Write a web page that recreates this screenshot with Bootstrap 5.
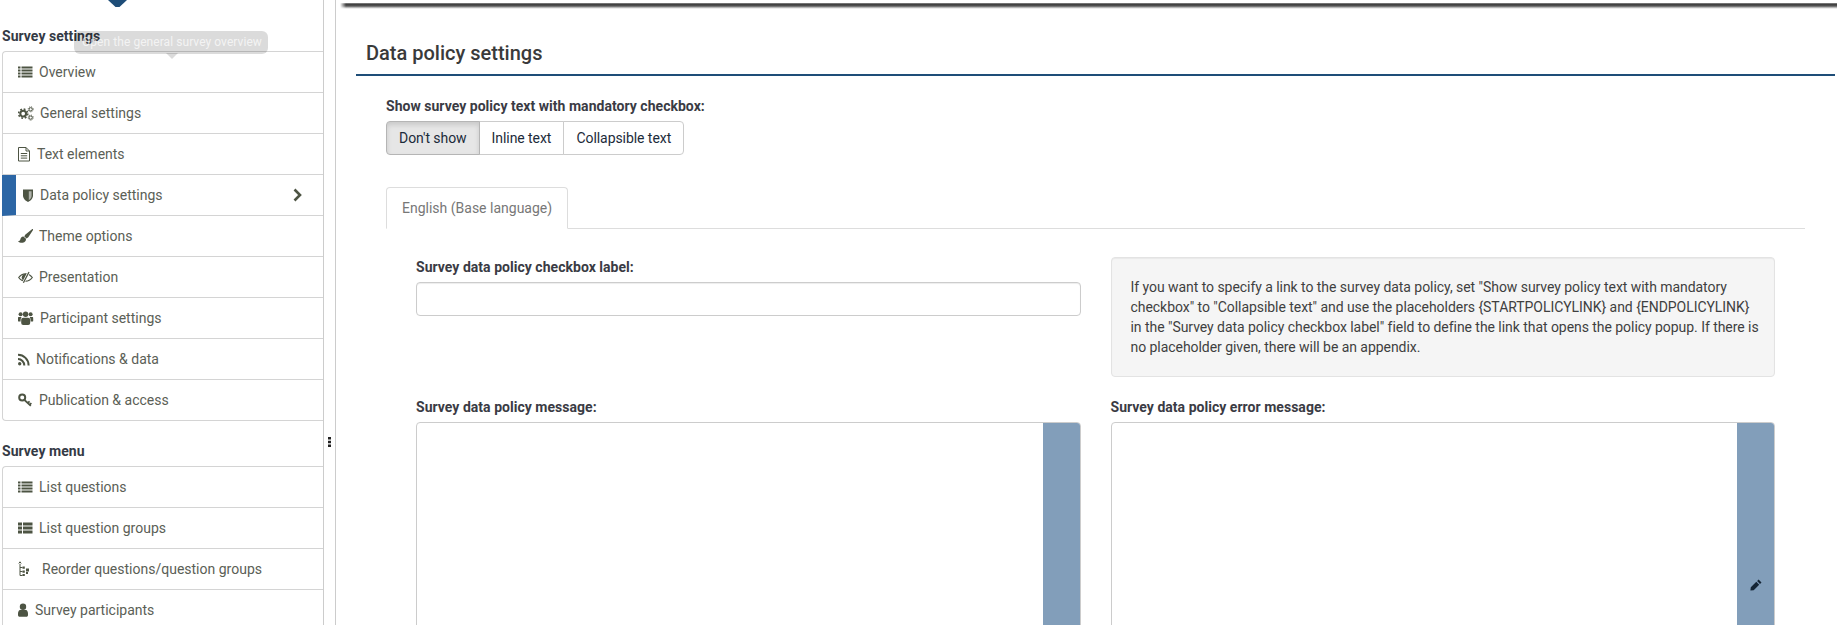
<!DOCTYPE html>
<html lang="en">
<head>
<meta charset="utf-8">
<title>Data policy settings</title>
<link rel="stylesheet" href="https://cdn.jsdelivr.net/npm/bootstrap@5.3.0/dist/css/bootstrap.min.css">
<style>
html,body{height:625px;overflow:hidden;}
body{font-family:Roboto,"Liberation Sans",sans-serif;font-size:14px;line-height:20px;color:#333;background:#fff;}
.sm-shell{height:625px;position:relative;}
.sm-side{width:336px;flex:none;border-right:1px solid #ccc;height:625px;overflow:hidden;}
.sm-side-in{width:324px;height:625px;padding-left:2px;border-right:1px solid #ccc;}
.sm-tri{display:block;margin-left:106px;margin-bottom:19px;}
.sm-head{font-size:14px;font-weight:700;line-height:20px;color:#343a45;margin:0 0 5px -2px;padding-left:2px;letter-spacing:.04px;}
.sm-head-2{margin-top:20px;}
.sm-list{--bs-list-group-border-color:#ccc;--bs-list-group-border-radius:4px;--bs-list-group-color:#5b6056;border-top-right-radius:0;border-bottom-right-radius:0;}
.sm-list .list-group-item{padding:10px 0 10px 15px;border-right:0;border-color:#d4d4d4;font-size:14px;line-height:20px;display:flex;align-items:center;color:#5b6056;border-top-right-radius:0;border-bottom-right-radius:0;}
.sm-list .list-group-item.sm-on{border-left:14px solid #2c66a5;padding-left:6px;}
.sm-list svg{flex:none;display:block;fill:#4d5443;}
.sm-chev{margin-left:auto;margin-right:20px;}
.sm-tip{position:absolute;left:74px;top:31px;padding:0;--bs-tooltip-bg:rgba(0,0,0,.14);--bs-tooltip-opacity:1;margin:0;}
.sm-tip .tooltip-inner{max-width:none;width:194px;height:23px;padding:3px 8px;font-family:Roboto,sans-serif;font-size:12px;line-height:17px;color:rgba(255,255,255,.7);text-align:left;white-space:nowrap;letter-spacing:.06px;}
.sm-tip .tooltip-arrow{position:absolute;left:92px;bottom:-6px;}
.sm-grip{position:absolute;left:328px;top:437px;display:block;}
.sm-main{flex:1;min-width:0;padding:0 2px 0 20px;overflow:hidden;}
.sm-topbar{height:6px;margin:3px -2px 0 -16px;background:linear-gradient(180deg,#aaa 0,#3c3c3c 17%,#555 50%,#999 67%,#ddd 85%,#fff 100%);-webkit-mask-image:linear-gradient(90deg,transparent 0,#000 6px);mask-image:linear-gradient(90deg,transparent 0,#000 6px);}
.sm-title{font-size:20px;font-weight:500;line-height:28px;color:#3a3a3a;margin:30px 0 0;padding:0 0 7px 10px;border-bottom:2px solid #1e4d78;}
.sm-body{padding:20px 30px 0;}
.sm-label{display:block;font-size:14px;font-weight:700;line-height:20px;color:#3a3b44;margin:0 0 5px;letter-spacing:.03px;}
.sm-btns .btn{--bs-btn-font-size:14px;--bs-btn-line-height:20px;--bs-btn-padding-x:12px;--bs-btn-padding-y:6px;--bs-btn-border-radius:4px;--bs-btn-border-color:#ccc;--bs-btn-color:#1c2b3a;--bs-btn-bg:#fff;letter-spacing:-.06px;}
.sm-btns .btn.active{background:#e6e6e6;border-color:#b5b5b5;color:#1c2b3a;box-shadow:inset 0 3px 5px rgba(0,0,0,.125);}
.sm-tabs{--bs-nav-tabs-border-color:#ddd;--bs-nav-tabs-border-radius:4px;--bs-nav-tabs-link-active-color:#777;--bs-nav-tabs-link-active-border-color:#ddd #ddd #fff;margin-top:32px;}
.sm-tabs .nav-link{padding:10px 15px;font-size:14px;line-height:20px;}
.sm-pane{padding:28px 30px 0;}
.sm-pane .row{--bs-gutter-x:30px;}
.sm-input{height:34px;padding:6px 12px;font-size:14px;border-radius:4px;border-color:#ccc;box-shadow:inset 0 1px 1px rgba(0,0,0,.075);}
.sm-well{background:#f5f5f5;border:1px solid #e3e3e3;border-radius:4px;padding:19px 11px 19px 19px;font-size:14px;line-height:20px;color:#3f3f3f;letter-spacing:-.05px;box-shadow:inset 0 1px 1px rgba(0,0,0,.05);}
.sm-row2{margin-top:20px;}
.sm-editor{height:300px;border:1px solid #ccc;border-radius:4px;background:#fff;overflow:hidden;}
.sm-panel{width:37px;margin-left:auto;background:#829eba;padding-top:156px;display:flex;justify-content:center;}
.sm-panel svg{display:block;fill:#152535;}
</style>
</head>
<body>
<div class="sm-shell d-flex">
  <aside class="sm-side">
    <div class="sm-side-in">
      <svg class="sm-tri" width="19" height="7" viewBox="0 0 19 7"><path d="M0 0H19L11.5 7H7.5Z" fill="#1e4d78"/></svg>
      <div class="sm-head">Survey settings</div>
      <div class="list-group sm-list">
        <a class="list-group-item list-group-item-action" href="#"><svg width="21" height="16" viewBox="0 0 21 16"><path d="M0 2.500h2.500v2H0zM3.500 2.500H14.500v2H3.500zM0 5.500h2.500v2H0zM3.500 5.500H14.500v2H3.500zM0 8.500h2.500v2H0zM3.500 8.500H14.500v2H3.500zM0 11.500h2.500v2H0zM3.500 11.500H14.500v2H3.500z"/></svg>Overview</a>
        <a class="list-group-item list-group-item-action" href="#"><svg width="22" height="16" viewBox="0 0 22 16"><g fill="none" stroke="#4d5443"><circle cx="5.200" cy="8.600" r="2.900" stroke-width="2.100"/><circle cx="5.200" cy="8.600" r="4.600" stroke-width="1.600" stroke-dasharray="1.800 1.810"/><circle cx="12.700" cy="4.300" r="1.600" stroke-width="1"/><circle cx="12.700" cy="4.300" r="2.500" stroke-width="1" stroke-dasharray="1 .96"/><circle cx="12.700" cy="12.600" r="1.600" stroke-width="1"/><circle cx="12.700" cy="12.600" r="2.500" stroke-width="1" stroke-dasharray="1 .96"/></g></svg>General settings</a>
        <a class="list-group-item list-group-item-action" href="#"><svg width="19" height="16" viewBox="0 0 19 16"><path d="M.5 1.500h7.500l3.500 3.500v10H.5zM8 1.500V5h3.500M2.800 7.500h6.400M2.800 9.800h6.400M2.800 12.100h6.400" fill="none" stroke="#4d5443" stroke-width="1"/></svg>Text elements</a>
        <a class="list-group-item list-group-item-action sm-on" href="#"><svg width="18" height="16" viewBox="0 0 18 16"><path d="M1 2.500h10v6c0 3.500-3 5.500-5 6.500-2-1-5-3-5-6.500z"/><path d="M6.800 4.200v9c1.800-1.100 2.800-2.700 2.800-4.700V4.200z" fill="#fff" fill-opacity=".55"/></svg>Data policy settings<svg class="sm-chev" width="11" height="14" viewBox="0 0 11 14"><path d="M2.500 1.500 8 7l-5.500 5.500" fill="none" stroke="#4d5443" stroke-width="2.600"/></svg></a>
        <a class="list-group-item list-group-item-action" href="#"><svg width="21" height="16" viewBox="0 0 21 16"><path d="M14 1.200 7.200 6.800l-.9 1.700 2.300 2 1.700-1.200L14.900 2.200c.4-.8-.2-1.500-.9-1zM5.400 8.600C3.400 8.800 2.600 10.200 2.300 11.500 2 12.700 1.400 13.100 0 13.200c1.300 1.300 3 1.800 4.700 1.500 2.400-.4 3.500-2 3.300-4z"/></svg>Theme options</a>
        <a class="list-group-item list-group-item-action" href="#"><svg width="21" height="16" viewBox="0 0 21 16"><path d="M.7 8.500C2.500 6 4.800 4.800 7.500 4.800S12.500 6 14.300 8.500C12.500 11 10.200 12.200 7.500 12.200S2.500 11 .7 8.500z" fill="none" stroke="#4d5443" stroke-width="1.200"/><path d="M8.800 4.800A4 4 0 0 0 3.700 8.500c0 1.500.9 2.800 2.100 3.400z"/><path d="M11 2.800 5.200 14" stroke="#fff" stroke-width="2.600" fill="none"/><path d="M11 3 5.400 13.800" stroke="#4d5443" stroke-width="1.300" fill="none"/></svg>Presentation</a>
        <a class="list-group-item list-group-item-action" href="#"><svg width="22" height="16" viewBox="0 0 22 16"><circle cx="2.600" cy="4.300" r="2"/><circle cx="12.600" cy="4.300" r="2"/><circle cx="7.600" cy="4.300" r="2.700"/><path d="M.4 7h3.200c-.6.800-1 1.800-1 3v1.500H.4C.1 11.500 0 11.200 0 11V8.500C0 7.600.1 7.300.4 7zM14.800 7h-3.200c.6.800 1 1.800 1 3v1.500h2.200c.3 0 .4-.3.4-.5V8.500c0-.9-.1-1.200-.4-1.500z"/><rect x="3.200" y="7.700" width="9" height="7.300" rx="2"/></svg>Participant settings</a>
        <a class="list-group-item list-group-item-action" href="#"><svg width="18" height="16" viewBox="0 0 18 16"><circle cx="1.700" cy="12.700" r="1.700"/><path d="M0 8.100a6.300 6.300 0 0 1 6.300 6.300M0 3.800a10.600 10.600 0 0 1 10.600 10.600" fill="none" stroke="#4d5443" stroke-width="2"/></svg>Notifications &amp; data</a>
        <a class="list-group-item list-group-item-action" href="#"><svg width="21" height="16" viewBox="0 0 21 16"><circle cx="4.200" cy="5.600" r="3" fill="none" stroke="#4d5443" stroke-width="2"/><path d="m6.500 8 6.300 5.800M9.700 11l1.900-1.700M11.600 12.700l1.800-1.600" fill="none" stroke="#4d5443" stroke-width="1.700"/></svg>Publication &amp; access</a>
      </div>
      <div class="sm-head sm-head-2">Survey menu</div>
      <div class="list-group sm-list">
        <a class="list-group-item list-group-item-action" href="#"><svg width="21" height="16" viewBox="0 0 21 16"><path d="M0 2.500h2.500v2H0zM3.500 2.500H14.500v2H3.500zM0 5.500h2.500v2H0zM3.500 5.500H14.500v2H3.500zM0 8.500h2.500v2H0zM3.500 8.500H14.500v2H3.500zM0 11.500h2.500v2H0zM3.500 11.500H14.500v2H3.500z"/></svg>List questions</a>
        <a class="list-group-item list-group-item-action" href="#"><svg width="21" height="16" viewBox="0 0 21 16"><path d="M0 2.500h4v3H0zM5 2.500h9.500v3H5zM0 6.500h4v3H0zM5 6.500h9.500v3H5zM0 10.500h4v3H0zM5 10.500h9.500v3H5z"/></svg>List question groups</a>
        <a class="list-group-item list-group-item-action" href="#"><svg width="24" height="16" viewBox="0 0 24 16"><path d="M2 3v11.500h2.500M2 6.500h2.500M2 10.500h2.500M.8 2.500 2 .8l1.200 1.700" fill="none" stroke="#4d5443" stroke-width="1"/><path d="M4.500 5.500h2.300v2.300H4.500zM4.500 9.500h2.300v2.300H4.500zM4.500 13h2.300v2H4.500zM8 7.500h3v3H8zM8 11h2v2H8z"/></svg>Reorder questions/question groups</a>
        <a class="list-group-item list-group-item-action" href="#"><svg width="17" height="16" viewBox="0 0 17 16"><circle cx="5" cy="4.800" r="3.200"/><path d="M1.800 8h6.400c1.200.5 1.800 2 1.800 4v1c0 1-.7 1.800-1.700 1.800H1.700C.7 14.800 0 14 0 13v-1c0-2 .6-3.500 1.800-4z"/></svg>Survey participants</a>
      </div>
    </div>
  </aside>
  <div class="tooltip bs-tooltip-top show sm-tip" role="tooltip"><div class="tooltip-arrow"></div><div class="tooltip-inner">Open the general survey overview</div></div>
  <svg class="sm-grip" width="3" height="10" viewBox="0 0 3 10"><path d="M0 0h3v2.500H0zM0 3.700h3v2.500H0zM0 7.400h3v2.500H0z" fill="#222"/></svg>
  <main class="sm-main">
    <div class="sm-topbar"></div>
    <h1 class="sm-title">Data policy settings</h1>
    <div class="sm-body">
      <span class="sm-label">Show survey policy text with mandatory checkbox:</span>
      <div class="btn-group sm-btns" role="group">
        <button type="button" class="btn active">Don't show</button>
        <button type="button" class="btn">Inline text</button>
        <button type="button" class="btn">Collapsible text</button>
      </div>
      <ul class="nav nav-tabs sm-tabs">
        <li class="nav-item"><a class="nav-link active" href="#">English (Base language)</a></li>
      </ul>
      <div class="sm-pane">
        <div class="row">
          <div class="col-6">
            <label class="sm-label" for="sm-cb">Survey data policy checkbox label:</label>
            <input id="sm-cb" class="form-control sm-input" type="text">
          </div>
          <div class="col-6">
            <div class="sm-well">If you want to specify a link to the survey data policy, set "Show survey policy text with mandatory checkbox" to "Collapsible text" and use the placeholders {STARTPOLICYLINK} and {ENDPOLICYLINK} in the "Survey data policy checkbox label" field to define the link that opens the policy popup. If there is no placeholder given, there will be an appendix.</div>
          </div>
        </div>
        <div class="row sm-row2">
          <div class="col-6">
            <span class="sm-label">Survey data policy message:</span>
            <div class="sm-editor d-flex"><div class="sm-panel"></div></div>
          </div>
          <div class="col-6">
            <span class="sm-label">Survey data policy error message:</span>
            <div class="sm-editor d-flex"><div class="sm-panel"><svg width="12" height="12" viewBox="0 0 12 12"><path d="M8.600.5 11.500 3.400 10 4.900 7.100 2zM6.300 2.800 9.200 5.700 3.700 11.200.4 11.600.8 8.300z"/></svg></div></div>
          </div>
        </div>
      </div>
    </div>
  </main>
</div>
<script src="https://cdn.jsdelivr.net/npm/bootstrap@5.3.0/dist/js/bootstrap.bundle.min.js"></script>
</body>
</html>
